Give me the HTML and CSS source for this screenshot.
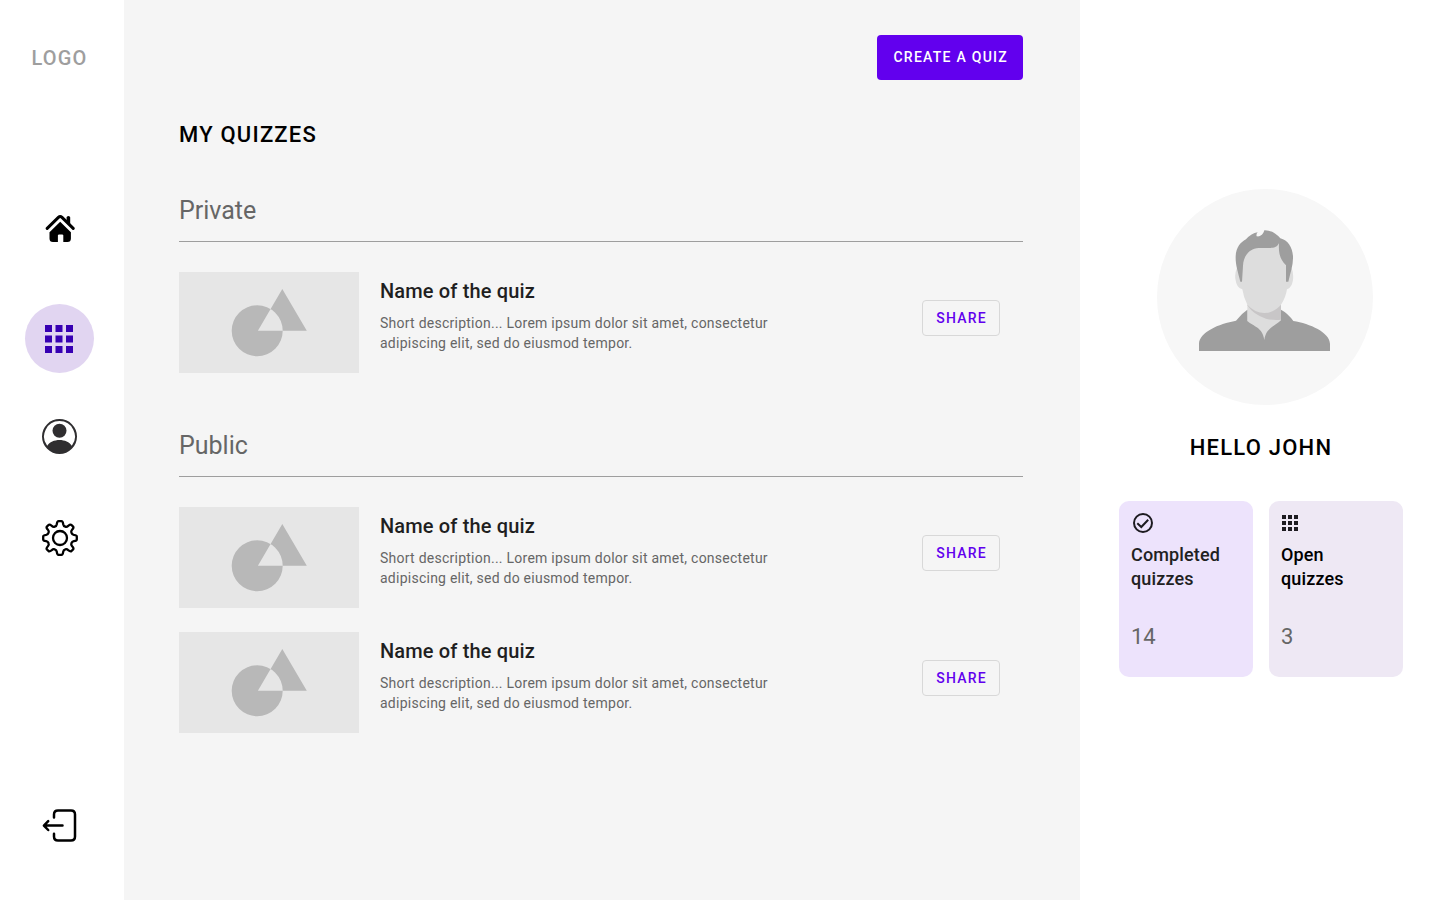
FILE: index.html
```html
<!DOCTYPE html>
<html lang="en">
<head>
<meta charset="utf-8">
<meta name="viewport" content="width=device-width, initial-scale=1">
<title>My quizzes</title>
<link rel="stylesheet" href="styles.css">
</head>
<body>
<svg class="defs" aria-hidden="true">
  <symbol id="shapes" viewBox="0 0 180 101">
    <path fill-rule="evenodd" d="M52.7 58.7a25.5 25.5 0 1 0 51 0a25.5 25.5 0 1 0-51 0zM103.3 17L127.8 58.7H78.9z"/>
  </symbol>
  <symbol id="grid" viewBox="0 0 28 28">
    <path d="M0 0h7v7H0zM10.5 0h7v7h-7zM21 0h7v7h-7zM0 10.5h7v7H0zM10.5 10.5h7v7h-7zM21 10.5h7v7h-7zM0 21h7v7H0zM10.5 21h7v7h-7zM21 21h7v7h-7z"/>
  </symbol>
</svg>
<div class="app">
  <aside class="sidebar">
    <a class="logo" href="#">LOGO</a>
    <nav class="nav" aria-label="Main">
      <a class="nav-link" href="#" aria-label="Home">
        <svg width="30" height="30" viewBox="0 0 30 30"><path d="M2.2 14.4L13.4 3.4Q15.2 1.6 17 3.4L28.2 14.4" fill="none" stroke="#000" stroke-width="3" stroke-linecap="round" stroke-linejoin="round"/><path d="M21.6 3.6Q21.6 2 23.4 2T25.2 3.6V10.4L21.6 7z"/><path d="M15.2 7.8L25.9 18.2V24.5Q25.9 28 22.4 28H18.3V21.2Q18.3 20.4 17.1 20.4H14.1Q12.9 20.4 12.9 21.2V28H8Q4.5 28 4.5 24.5V18.2z"/></svg>
      </a>
      <a class="nav-link nav-link-active" href="#" aria-label="Quizzes" aria-current="page">
        <svg width="28" height="28"><use href="#grid"/></svg>
      </a>
      <a class="nav-link nav-link-account" href="#" aria-label="Account">
        <svg width="35" height="35" viewBox="0 0 35 35" fill="#2f2e30"><path fill-rule="evenodd" d="M17.5 0a17.5 17.5 0 1 0 0 35a17.5 17.5 0 1 0 0-35zM17.5 2.1A15.4 15.4 0 0 1 29.8 26.8C27.5 23.2 22.6 21.1 17.5 21.1S7.5 23.2 5.2 26.8A15.4 15.4 0 0 1 17.5 2.1z"/><circle cx="17.5" cy="11.7" r="7"/></svg>
      </a>
      <a class="nav-link nav-link-settings" href="#" aria-label="Settings">
        <svg width="36" height="36" viewBox="0 0 36 36" fill="none" stroke="#000" stroke-width="2.3" stroke-linejoin="round"><path d="M14.8 4.2Q15.2 1.2 16.6 1.2H19.4Q20.8 1.2 21.2 4.2Q21.5 6 23.3 6.6Q24.8 7.2 26.2 5.9Q28.4 4.2 29.5 5L31.1 6.6Q32.1 7.7 30.1 9.8Q28.8 11.2 29.4 12.7Q30 14.5 31.8 14.8Q34.8 15.2 34.8 16.6V19.4Q34.8 20.8 31.8 21.2Q30 21.5 29.4 23.3Q28.8 24.8 30.1 26.2Q32.1 28.3 31.1 29.4L29.5 31Q28.4 31.9 26.2 30.1Q24.8 28.8 23.3 29.4Q21.5 30 21.2 31.8Q20.8 34.8 19.4 34.8H16.6Q15.2 34.8 14.8 31.8Q14.5 30 12.7 29.4Q11.2 28.8 9.8 30.1Q7.6 31.9 6.5 31L4.9 29.4Q3.9 28.3 5.9 26.2Q7.2 24.8 6.6 23.3Q6 21.5 4.2 21.2Q1.2 20.8 1.2 19.4V16.6Q1.2 15.2 4.2 14.8Q6 14.5 6.6 12.7Q7.2 11.2 5.9 9.8Q3.9 7.7 4.9 6.6L6.5 5Q7.6 4.2 9.8 5.9Q11.2 7.2 12.7 6.6Q14.5 6 14.8 4.2z"/><circle cx="18" cy="18" r="7"/></svg>
      </a>
    </nav>
    <a class="nav-link nav-link-exit" href="#" aria-label="Log out">
      <svg width="36" height="34" viewBox="0 0 36 34" fill="none" stroke="#000" stroke-width="2.5" stroke-linecap="round" stroke-linejoin="round"><path d="M12 8.4V5.6Q12 1.6 16 1.6H29Q33 1.6 33 5.6V27.6Q33 31.6 29 31.6H16Q12 31.6 12 27.6V24.8"/><path d="M20.5 16.6H2.4M6.2 12.2L1.9 16.6L6.2 21"/></svg>
    </a>
  </aside>

  <main class="main">
    <button class="create" type="button">CREATE A QUIZ</button>
    <h1 class="heading title">MY QUIZZES</h1>

    <section class="group">
      <h2 class="group-title">Private</h2>
      <article class="quiz">
        <svg class="thumb" aria-hidden="true"><use href="#shapes"/></svg>
        <div class="quiz-text">
          <h3 class="quiz-name">Name of the quiz</h3>
          <p class="quiz-desc">Short description... Lorem ipsum dolor sit amet, consectetur adipiscing elit, sed do eiusmod tempor.</p>
        </div>
        <button class="share" type="button">SHARE</button>
      </article>
    </section>

    <section class="group">
      <h2 class="group-title">Public</h2>
      <article class="quiz">
        <svg class="thumb" aria-hidden="true"><use href="#shapes"/></svg>
        <div class="quiz-text">
          <h3 class="quiz-name">Name of the quiz</h3>
          <p class="quiz-desc">Short description... Lorem ipsum dolor sit amet, consectetur adipiscing elit, sed do eiusmod tempor.</p>
        </div>
        <button class="share" type="button">SHARE</button>
      </article>
      <article class="quiz">
        <svg class="thumb" aria-hidden="true"><use href="#shapes"/></svg>
        <div class="quiz-text">
          <h3 class="quiz-name">Name of the quiz</h3>
          <p class="quiz-desc">Short description... Lorem ipsum dolor sit amet, consectetur adipiscing elit, sed do eiusmod tempor.</p>
        </div>
        <button class="share" type="button">SHARE</button>
      </article>
    </section>
  </main>

  <aside class="profile">
    <svg class="avatar" viewBox="21 27 648 648" role="img" aria-label="Profile picture">
      <circle cx="345" cy="351" r="324" fill="#f7f7f7"/>
      <path fill="#ddd" d="M260 266Q254 280 256 296Q260 325 277 328Q281 354 292 374V425L343 482L393 425V374Q407 354 411 328Q425 324 429 300Q431 280 426 268L390 190H300z"/>
      <path fill="#c8c6c7" d="M292 374Q315 399 343 399Q371 399 393 374V419Q371 422 348 416Q311 405 292 376z"/>
      <path fill="#9e9e9e" d="M147 513V491C148 457 206 431 258 422Q275 400 292 389V423C311 440 338 442 343 480C348 442 374 440 393 421V389Q414 400 430 423C480 431 539 457 540 491V513z"/>
      <path fill="#9e9e9e" d="M271 305C263 273 256 253 257 229C258 203 271 187 288 178Q304 160 323 157Q318 162 320 169C331 171 340 163 343 151Q369 150 391 175C414 181 428 202 429 230C430 254 421 278 415 305H408V256C391 239 385 221 387 190C380 203 371 204 357 204H326C296 206 280 230 279 257L276 305z"/>
    </svg>
    <h2 class="heading greeting">HELLO JOHN</h2>
    <div class="stats">
      <section class="stat stat-done">
        <svg class="stat-icon" width="24" height="20" viewBox="0 0 24 20" fill="none" stroke="#1d1b20" stroke-width="2"><circle cx="12" cy="10" r="9"/><path d="M6.3 10.2L10.3 14L17.2 6.8"/></svg>
        <h3 class="stat-name">Completed quizzes</h3>
        <p class="stat-value">14</p>
      </section>
      <section class="stat stat-open">
        <svg class="stat-icon" viewBox="0 0 18 20" width="18" height="20" fill="#1d1b20"><use href="#grid" x="1" y="2" width="16" height="16"/></svg>
        <h3 class="stat-name">Open<br>quizzes</h3>
        <p class="stat-value">3</p>
      </section>
    </div>
  </aside>
</div>
</body>
</html>
```
FILE: styles.css
```css
* { box-sizing: border-box; }
body {
  margin: 0;
  font-family: Roboto, "Liberation Sans", sans-serif;
  color: #000;
  background: #fff;
}
h1, h2, h3, p { margin: 0; }
a { color: inherit; text-decoration: none; }
svg { display: block; }
button { font-family: inherit; cursor: pointer; }
.defs { display: none; }

.app {
  display: grid;
  grid-template-columns: 124px minmax(0, 1fr) 360px;
  min-height: 100vh;
}

.sidebar {
  display: flex;
  flex-direction: column;
  align-items: center;
  padding: 46px 5px 57px 0;
}
.logo {
  font-size: 20px;
  line-height: 24px;
  font-weight: 500;
  letter-spacing: 0.06em;
  color: #9e9e9e;
}
.nav {
  display: flex;
  flex-direction: column;
  align-items: center;
  margin-top: 144px;
}
.nav-link {
  display: flex;
  align-items: center;
  justify-content: center;
}
.nav-link-active {
  width: 69px;
  height: 69px;
  margin: 60px 0 46px;
  padding-right: 1px;
  border-radius: 50%;
  background: #e1d5f1;
  fill: #3700b3;
}
.nav-link-settings { margin-top: 66px; }
.nav-link-exit { margin-top: auto; }

.main {
  display: flex;
  flex-direction: column;
  padding: 35px 57px 40px 55px;
  background: #f5f5f5;
}
.create {
  align-self: flex-end;
  height: 45px;
  padding: 0 15px 2px 16px;
  border: 0;
  border-radius: 4px;
  background: #6200ee;
  color: #fff;
  font-size: 14px;
  font-weight: 500;
  letter-spacing: 0.09em;
}
.heading {
  font-size: 22px;
  line-height: 28px;
  font-weight: 500;
  letter-spacing: 0.055em;
}
.title { margin: 41px 0 46px; }

.group { margin-bottom: 57px; }
.group-title {
  padding-bottom: 14px;
  margin-bottom: 30px;
  border-bottom: 1px solid #9e9e9e;
  font-size: 25px;
  line-height: 32px;
  font-weight: 400;
  color: #666;
}
.quiz {
  display: flex;
  align-items: flex-start;
}
.quiz + .quiz { margin-top: 24px; }
.thumb {
  flex: none;
  width: 180px;
  height: 101px;
  margin-right: 21px;
  background: #e6e6e6;
  fill: #b8b8b8;
}
.quiz-text {
  flex: 1;
  padding-top: 7px;
}
.quiz-name {
  font-size: 20px;
  line-height: 24px;
  font-weight: 500;
  letter-spacing: 0.0075em;
  color: #1f1f1f;
}
.quiz-desc {
  max-width: 410px;
  margin-top: 10px;
  font-size: 14px;
  line-height: 20px;
  letter-spacing: 0.0178em;
  color: #666;
}
.share {
  height: 36px;
  margin: 28px 23px 0 20px;
  padding: 0 12px 0 13px;
  border: 1px solid #d8d8d8;
  border-radius: 4px;
  background: transparent;
  color: #6200ee;
  font-size: 14px;
  font-weight: 500;
  letter-spacing: 0.09em;
}

.profile {
  display: flex;
  flex-direction: column;
  align-items: center;
  padding: 189px 37px 40px 39px;
}
.avatar {
  width: 216px;
  height: 216px;
  margin-left: 8px;
}
.greeting { margin: 29px 0 39px; }
.stats {
  display: grid;
  grid-template-columns: 1fr 1fr;
  gap: 16px;
  width: 100%;
}
.stat {
  min-height: 176px;
  padding: 12px;
  border-radius: 10px;
}
.stat-done { background: #ede3fc; color: #212121; }
.stat-open { background: #eee8f4; }
.stat-icon { height: 20px; }
.stat-name {
  margin-top: 10px;
  font-size: 18px;
  line-height: 24px;
  font-weight: 500;
  letter-spacing: 0.0075em;
}
.stat-value {
  margin-top: 32px;
  font-size: 22px;
  line-height: 28px;
  color: #666;
}
```
